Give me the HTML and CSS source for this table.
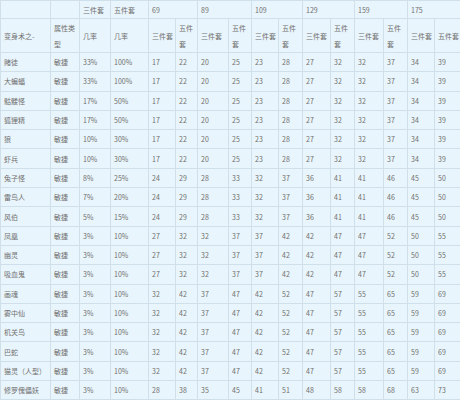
FILE: index.html
```html
<!DOCTYPE html>
<html lang="zh">
<head>
<meta charset="utf-8">
<link rel="stylesheet" href="styles.css">
</head>
<body>
<div class="wrap">
<table class="grid">
<colgroup>
<col style="width:50px"><col style="width:29px"><col style="width:31px"><col style="width:38px">
<col style="width:27px"><col style="width:22px"><col style="width:31px"><col style="width:23px">
<col style="width:27px"><col style="width:24px"><col style="width:28px"><col style="width:24px">
<col style="width:29px"><col style="width:24px"><col style="width:27px"><col style="width:26px">
</colgroup>
<thead>
<tr class="h1"><td></td><td></td><td>三件套</td><td>五件套</td><td colspan="2">69</td><td colspan="2">89</td><td colspan="2">109</td><td colspan="2">129</td><td colspan="2">159</td><td colspan="2">175</td></tr>
<tr class="h2"><td>变身术之-</td><td>属性类型</td><td>几率</td><td>几率</td><td>三件套</td><td>五件套</td><td>三件套</td><td>五件套</td><td>三件套</td><td>五件套</td><td>三件套</td><td>五件套</td><td>三件套</td><td>五件套</td><td>三件套</td><td>五件套</td></tr>
</thead>
<tbody>
<tr><td>赌徒</td><td>敏捷</td><td>33%</td><td>100%</td><td>17</td><td>22</td><td>20</td><td>25</td><td>23</td><td>28</td><td>27</td><td>32</td><td>32</td><td>37</td><td>34</td><td>39</td></tr>
<tr><td>大蝙蝠</td><td>敏捷</td><td>33%</td><td>100%</td><td>17</td><td>22</td><td>20</td><td>25</td><td>23</td><td>28</td><td>27</td><td>32</td><td>32</td><td>37</td><td>34</td><td>39</td></tr>
<tr><td>骷髅怪</td><td>敏捷</td><td>17%</td><td>50%</td><td>17</td><td>22</td><td>20</td><td>25</td><td>23</td><td>28</td><td>27</td><td>32</td><td>32</td><td>37</td><td>34</td><td>39</td></tr>
<tr><td>狐狸精</td><td>敏捷</td><td>17%</td><td>50%</td><td>17</td><td>22</td><td>20</td><td>25</td><td>23</td><td>28</td><td>27</td><td>32</td><td>32</td><td>37</td><td>34</td><td>39</td></tr>
<tr><td>狼</td><td>敏捷</td><td>10%</td><td>30%</td><td>17</td><td>22</td><td>20</td><td>25</td><td>23</td><td>28</td><td>27</td><td>32</td><td>32</td><td>37</td><td>34</td><td>39</td></tr>
<tr><td>虾兵</td><td>敏捷</td><td>10%</td><td>30%</td><td>17</td><td>22</td><td>20</td><td>25</td><td>23</td><td>28</td><td>27</td><td>32</td><td>32</td><td>37</td><td>34</td><td>39</td></tr>
<tr><td>兔子怪</td><td>敏捷</td><td>8%</td><td>25%</td><td>24</td><td>29</td><td>28</td><td>33</td><td>32</td><td>37</td><td>36</td><td>41</td><td>41</td><td>46</td><td>45</td><td>50</td></tr>
<tr><td>雷鸟人</td><td>敏捷</td><td>7%</td><td>20%</td><td>24</td><td>29</td><td>28</td><td>33</td><td>32</td><td>37</td><td>36</td><td>41</td><td>41</td><td>46</td><td>45</td><td>50</td></tr>
<tr><td>风伯</td><td>敏捷</td><td>5%</td><td>15%</td><td>24</td><td>29</td><td>28</td><td>33</td><td>32</td><td>37</td><td>36</td><td>41</td><td>41</td><td>46</td><td>45</td><td>50</td></tr>
<tr><td>凤凰</td><td>敏捷</td><td>3%</td><td>10%</td><td>27</td><td>32</td><td>32</td><td>37</td><td>37</td><td>42</td><td>42</td><td>47</td><td>47</td><td>52</td><td>50</td><td>55</td></tr>
<tr><td>幽灵</td><td>敏捷</td><td>3%</td><td>10%</td><td>27</td><td>32</td><td>32</td><td>37</td><td>37</td><td>42</td><td>42</td><td>47</td><td>47</td><td>52</td><td>50</td><td>55</td></tr>
<tr><td>吸血鬼</td><td>敏捷</td><td>3%</td><td>10%</td><td>27</td><td>32</td><td>32</td><td>37</td><td>37</td><td>42</td><td>42</td><td>47</td><td>47</td><td>52</td><td>50</td><td>55</td></tr>
<tr><td>画魂</td><td>敏捷</td><td>3%</td><td>10%</td><td>32</td><td>42</td><td>37</td><td>47</td><td>42</td><td>52</td><td>47</td><td>57</td><td>55</td><td>65</td><td>59</td><td>69</td></tr>
<tr><td>雾中仙</td><td>敏捷</td><td>3%</td><td>10%</td><td>32</td><td>42</td><td>37</td><td>47</td><td>42</td><td>52</td><td>47</td><td>57</td><td>55</td><td>65</td><td>59</td><td>69</td></tr>
<tr><td>机关鸟</td><td>敏捷</td><td>3%</td><td>10%</td><td>32</td><td>42</td><td>37</td><td>47</td><td>42</td><td>52</td><td>47</td><td>57</td><td>55</td><td>65</td><td>59</td><td>69</td></tr>
<tr><td>巴蛇</td><td>敏捷</td><td>3%</td><td>10%</td><td>32</td><td>42</td><td>37</td><td>47</td><td>42</td><td>52</td><td>47</td><td>57</td><td>55</td><td>65</td><td>59</td><td>69</td></tr>
<tr><td>猫灵（人型）</td><td>敏捷</td><td>3%</td><td>10%</td><td>32</td><td>42</td><td>37</td><td>47</td><td>42</td><td>52</td><td>47</td><td>57</td><td>55</td><td>65</td><td>59</td><td>69</td></tr>
<tr><td>修罗傀儡妖</td><td>敏捷</td><td>3%</td><td>10%</td><td>28</td><td>38</td><td>35</td><td>45</td><td>41</td><td>51</td><td>48</td><td>58</td><td>58</td><td>68</td><td>63</td><td>73</td></tr>
</tbody>
</table>
</div>
</body>
</html>
```
FILE: styles.css
```css
html, body {
  margin: 0;
  padding: 0;
  background: #e9f5fc;
  overflow: hidden;
}
.wrap {
  width: 460px;
  height: 400px;
  overflow: hidden;
}
.grid {
  table-layout: fixed;
  border-collapse: collapse;
  width: 460px;
  font-family: "Noto Sans CJK SC", "Noto Sans", sans-serif;
  font-size: 7px;
  color: #707070;
  background: #e9f5fc;
}
.grid td {
  border: 1px solid #cfe0eb;
  padding: 0 0 0 3px;
  line-height: 16px;
  vertical-align: middle;
  text-align: left;
  white-space: normal;
  word-break: break-all;
  overflow: hidden;
}
.grid tr.h1 td {
  height: 17px;
}
.grid tr.h2 td {
  height: 33px;
}
.grid tbody td {
  height: 18.3px;
}
.grid tbody td:first-child {
  white-space: nowrap;
}
```
